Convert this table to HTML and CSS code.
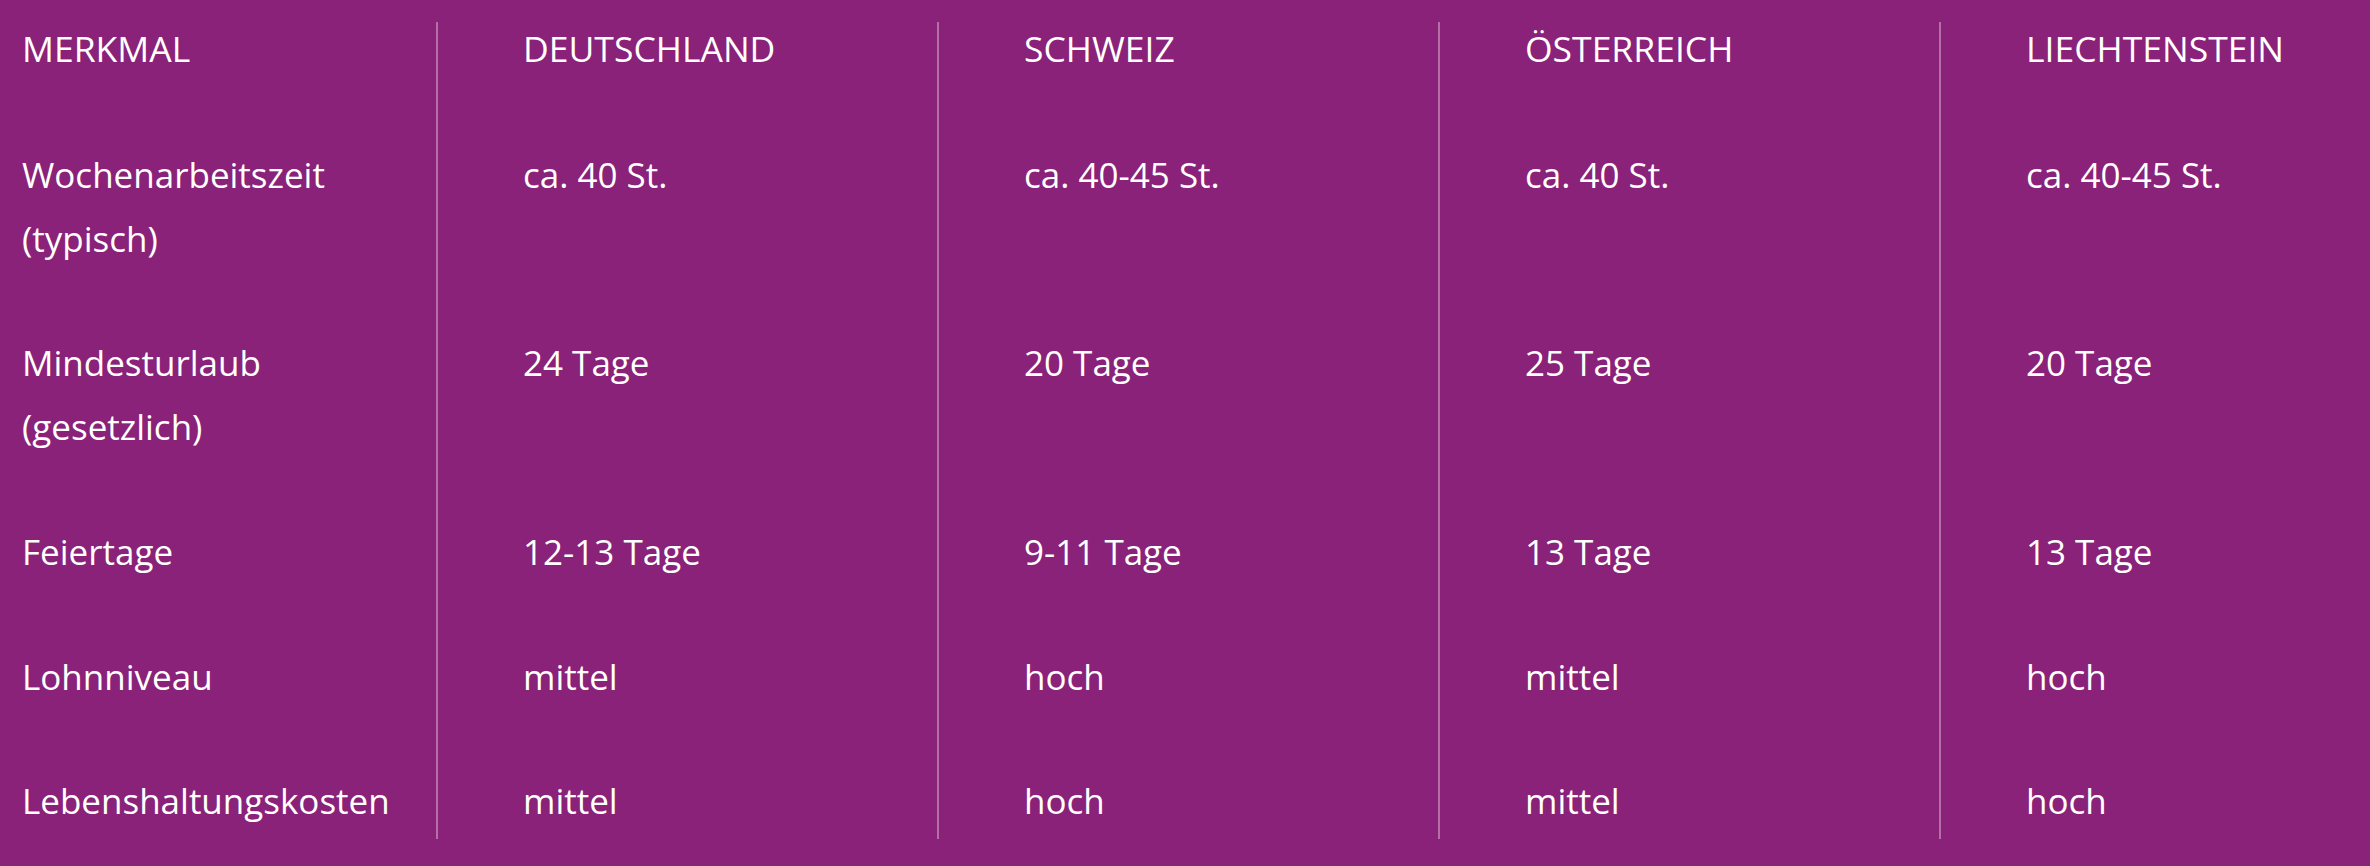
FILE: index.html
```html
<!DOCTYPE html>
<html lang="de">
<head>
<meta charset="utf-8">
<title>Vergleich Arbeitsbedingungen</title>
<link rel="stylesheet" href="styles.css">
</head>
<body>
<table class="compare">
  <colgroup>
    <col class="c-first">
    <col class="c-mid">
    <col class="c-mid">
    <col class="c-mid">
    <col class="c-last">
  </colgroup>
  <thead>
    <tr>
      <th>Merkmal</th>
      <th>Deutschland</th>
      <th>Schweiz</th>
      <th>Österreich</th>
      <th>Liechtenstein</th>
    </tr>
  </thead>
  <tbody>
    <tr>
      <td>Wochenarbeitszeit (typisch)</td>
      <td>ca. 40 St.</td>
      <td>ca. 40-45 St.</td>
      <td>ca. 40 St.</td>
      <td>ca. 40-45 St.</td>
    </tr>
    <tr>
      <td>Mindesturlaub (gesetzlich)</td>
      <td>24 Tage</td>
      <td>20 Tage</td>
      <td>25 Tage</td>
      <td>20 Tage</td>
    </tr>
    <tr>
      <td>Feiertage</td>
      <td>12-13 Tage</td>
      <td>9-11 Tage</td>
      <td>13 Tage</td>
      <td>13 Tage</td>
    </tr>
    <tr>
      <td>Lohnniveau</td>
      <td>mittel</td>
      <td>hoch</td>
      <td>mittel</td>
      <td>hoch</td>
    </tr>
    <tr>
      <td>Lebenshaltungskosten</td>
      <td>mittel</td>
      <td>hoch</td>
      <td>mittel</td>
      <td>hoch</td>
    </tr>
  </tbody>
</table>
</body>
</html>
```
FILE: styles.css
```css
html, body {
  margin: 0;
  padding: 0;
  background: #892278;
}

body {
  padding-top: 22px;
  font-family: "Open Sans", "Noto Sans", sans-serif;
  color: #ffffff;
}

.compare {
  width: 2370px;
  border-collapse: collapse;
  table-layout: fixed;
}

.c-first { width: 437px; }
.c-mid { width: 501px; }
.c-last { width: auto; }

.compare th,
.compare td {
  text-align: left;
  vertical-align: top;
  padding: 0 20px 60.7px 85px;
  border-left: 2px solid #b46fa7;
  font-size: 35px;
  line-height: 64px;
}

.compare th:first-child,
.compare td:first-child {
  padding-left: 22px;
  border-left: none;
}

.compare th {
  font-size: 35.5px;
  font-weight: 500;
  text-transform: uppercase;
  line-height: 52px;
  padding-bottom: 68.7px;
}

.compare tbody tr:last-child td {
  padding-bottom: 6px;
}
```
